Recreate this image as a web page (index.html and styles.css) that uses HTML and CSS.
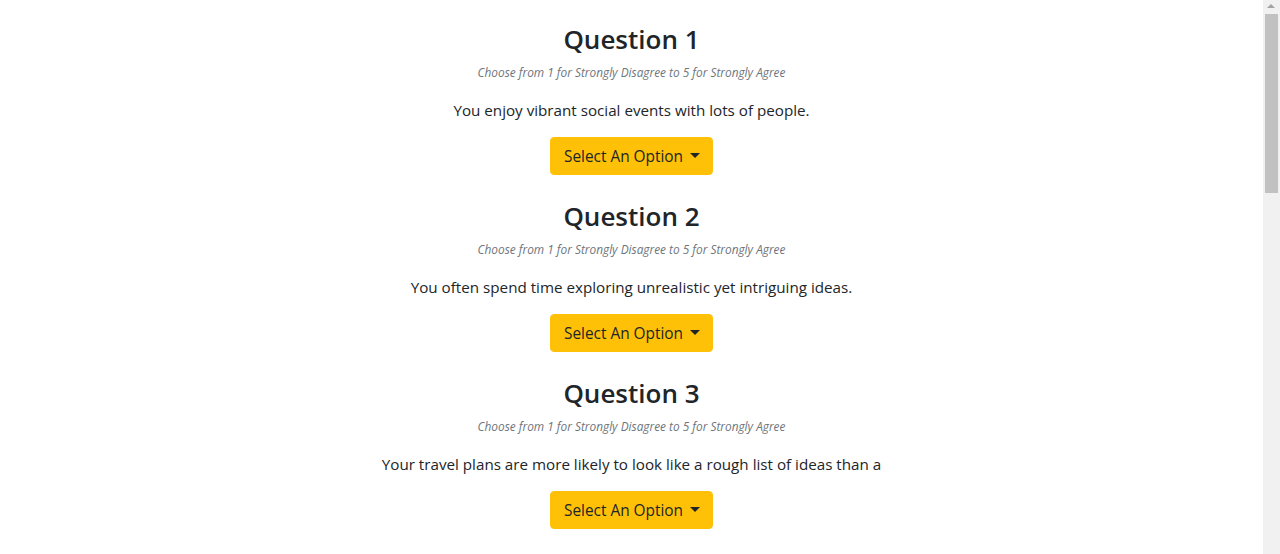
FILE: index.html
```html
<!DOCTYPE html>
<html lang="en">
<head>
<meta charset="utf-8">
<title>Questions</title>
<link rel="stylesheet" href="styles.css">
</head>
<body>
<main class="quiz">
  <section class="question">
    <h2 class="q-title">Question 1</h2>
    <p class="q-hint">Choose from 1 for Strongly Disagree to 5 for Strongly Agree</p>
    <p class="q-text">You enjoy vibrant social events with lots of people.</p>
    <button class="q-btn" type="button">Select An Option<span class="caret"></span></button>
  </section>
  <section class="question">
    <h2 class="q-title">Question 2</h2>
    <p class="q-hint">Choose from 1 for Strongly Disagree to 5 for Strongly Agree</p>
    <p class="q-text">You often spend time exploring unrealistic yet intriguing ideas.</p>
    <button class="q-btn" type="button">Select An Option<span class="caret"></span></button>
  </section>
  <section class="question">
    <h2 class="q-title">Question 3</h2>
    <p class="q-hint">Choose from 1 for Strongly Disagree to 5 for Strongly Agree</p>
    <p class="q-text">Your travel plans are more likely to look like a rough list of ideas than a</p>
    <button class="q-btn" type="button">Select An Option<span class="caret"></span></button>
  </section>
</main>
<div class="scrollbar">
  <div class="sb-arrow"></div>
  <div class="sb-thumb"></div>
</div>
</body>
</html>
```
FILE: styles.css
```css
html, body {
  margin: 0;
  padding: 0;
  height: 100%;
  overflow: hidden;
  background: #fff;
}
body {
  font-family: "Open Sans", "Noto Sans", sans-serif;
  color: #212529;
}
.quiz {
  width: 1263px;
  display: flex;
  flex-direction: column;
  align-items: center;
  padding-top: 20px;
}
.question {
  display: flex;
  flex-direction: column;
  align-items: center;
  height: 177px;
}
.q-title {
  margin: 0;
  font-size: 26px;
  font-weight: 600;
  line-height: 38px;
}
.q-hint {
  margin: 4px 0 0;
  font-size: 11.85px;
  font-style: italic;
  line-height: 20px;
  color: #6c757d;
}
.q-text {
  margin: 15px 0 0;
  font-size: 15.2px;
  line-height: 26px;
}
.q-btn {
  margin-top: 14px;
  height: 38px;
  padding: 0 12px 0 13px;
  border: 1px solid #ffc107;
  border-radius: 4px;
  background: #ffc107;
  color: #212529;
  font-family: inherit;
  font-size: 15.4px;
  display: flex;
  align-items: center;
}
.caret {
  display: inline-block;
  margin-left: 7px;
  width: 0;
  height: 0;
  border-top: 5px solid #212529;
  border-left: 5px solid transparent;
  border-right: 5px solid transparent;
  margin-top: -1px;
}
.scrollbar {
  position: fixed;
  top: 0;
  right: 0;
  width: 17px;
  height: 100%;
  background: #f1f1f1;
}
.sb-arrow {
  position: absolute;
  top: 4px;
  left: 4px;
  width: 0;
  height: 0;
  border-bottom: 4px solid #a3a3a3;
  border-left: 4px solid transparent;
  border-right: 4px solid transparent;
}
.sb-thumb {
  position: absolute;
  top: 14px;
  left: 2px;
  width: 13px;
  height: 179px;
  background: #c1c1c1;
}
```
